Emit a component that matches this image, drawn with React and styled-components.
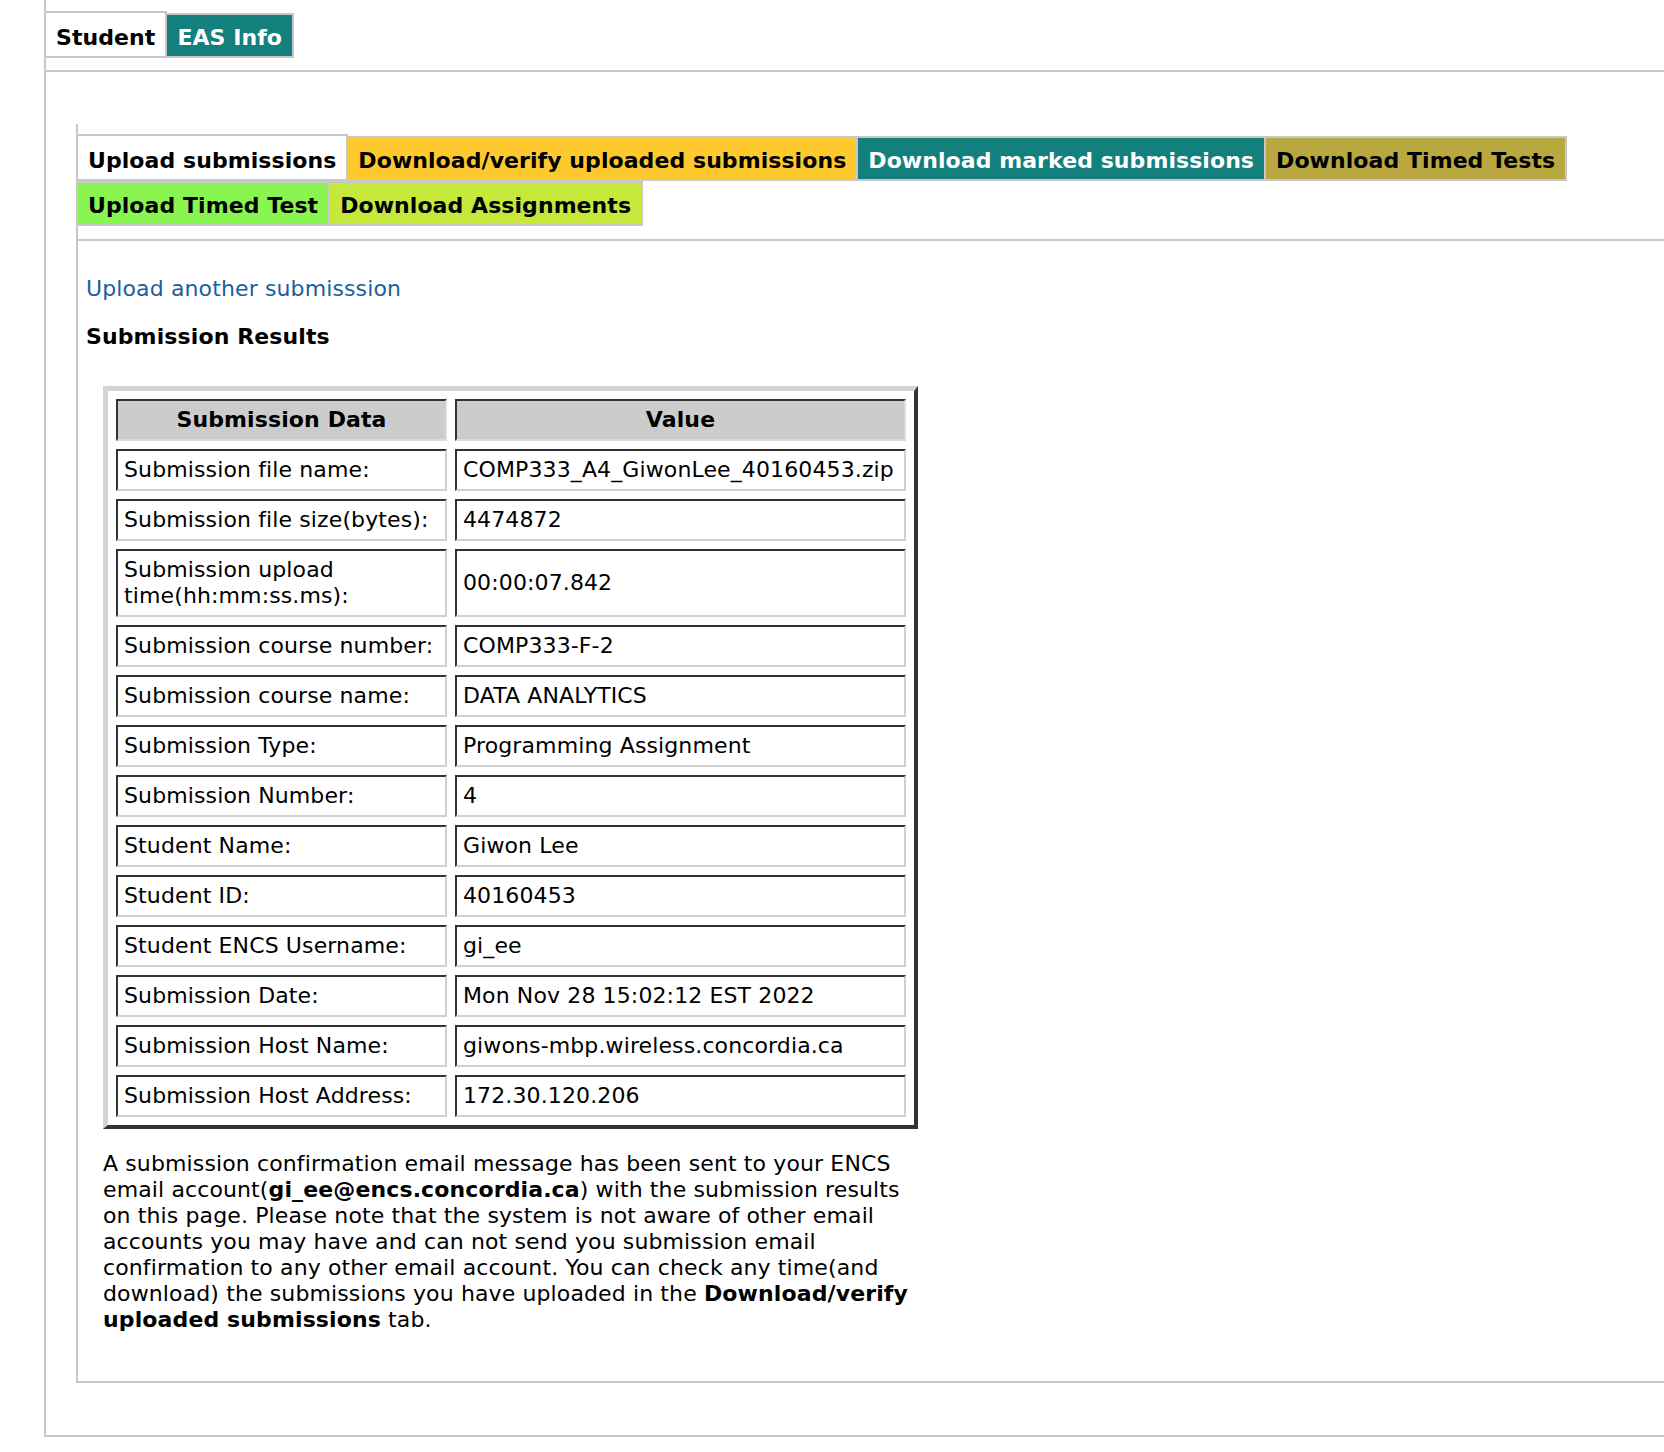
import React from 'react'
import styled, { createGlobalStyle } from 'styled-components'

const GlobalStyle = createGlobalStyle`
  html, body {
    margin: 0;
    padding: 0;
    background: #fff;
  }
  body {
    font-family: "DejaVu Sans", Verdana, sans-serif;
    font-size: 22px;
    line-height: 26px;
    letter-spacing: 0.12px;
    color: #000;
    overflow-x: hidden;
  }
`

const Frame = styled.div`
  margin-left: 44px;
  border-left: 2px solid #c8c8c8;
  border-bottom: 2px solid #c8c8c8;
`

const TabBar = styled.div`
  display: flex;
  flex-wrap: wrap;
  align-items: flex-end;
  padding: ${(p) => p.$pad};
  border-bottom: 2px solid #c8c8c8;
`

const Tab = styled.div`
  margin-left: -2px;
  padding: ${(p) => (p.$active ? '12px' : '10px')} 10px 5px;
  border: 2px solid #c8c8c8;
  background: ${(p) => p.$bg || '#fff'};
  color: ${(p) => p.$fg || '#000'};
  font-weight: bold;
  letter-spacing: 0.07px;
  white-space: nowrap;
`

const FrameBody = styled.div`
  padding: 52px 0 52px 30px;
`

const Panel = styled.div`
  border-left: 2px solid #c8c8c8;
  border-bottom: 2px solid #c8c8c8;
`

const Content = styled.div`
  padding: 13px 0 26px 8px;
`

const Para = styled.p`
  margin: 22px 0;
  font-weight: ${(p) => (p.$bold ? 'bold' : 'normal')};
`

const Link = styled.a`
  color: #1a5f9b;
  text-decoration: none;
  cursor: pointer;
`

const Indent = styled.div`
  margin-left: 17px;
`

const ResultTable = styled.table`
  margin-top: 36px;
  border-collapse: separate;
  border-spacing: 8px;
  border-style: solid;
  border-width: 5px 4px 4px 5px;
  border-color: #d4d4d4 #333 #333 #d4d4d4;
`

const HeadCell = styled.th`
  box-sizing: border-box;
  width: ${(p) => p.$w}px;
  padding: 6px;
  border-style: solid;
  border-width: 2px;
  border-color: #333 #dcdcdc #dcdcdc #333;
  background: #ccc;
  font-weight: bold;
  text-align: center;
`

const Cell = styled.td`
  padding: 6px;
  border-style: solid;
  border-width: 2px;
  border-color: #333 #d0d0d0 #d0d0d0 #333;
  vertical-align: middle;
  text-align: left;
`

const Note = styled.p`
  margin: 22px 0;
  width: 813px;
`

const outerTabs = [
  { label: 'Student', active: true },
  { label: 'EAS Info', bg: '#13807e', fg: '#fff' },
]

const innerTabs = [
  { label: 'Upload submissions', active: true },
  { label: 'Download/verify uploaded submissions', bg: '#fdc92f' },
  { label: 'Download marked submissions', bg: '#13807e', fg: '#fff' },
  { label: 'Download Timed Tests', bg: '#b8a83f' },
  { label: 'Upload Timed Test', bg: '#88f550' },
  { label: 'Download Assignments', bg: '#c6e83a' },
]

const rows = [
  ['Submission file name:', 'COMP333_A4_GiwonLee_40160453.zip'],
  ['Submission file size(bytes):', '4474872'],
  ['Submission upload time(hh:mm:ss.ms):', '00:00:07.842'],
  ['Submission course number:', 'COMP333-F-2'],
  ['Submission course name:', 'DATA ANALYTICS'],
  ['Submission Type:', 'Programming Assignment'],
  ['Submission Number:', '4'],
  ['Student Name:', 'Giwon Lee'],
  ['Student ID:', '40160453'],
  ['Student ENCS Username:', 'gi_ee'],
  ['Submission Date:', 'Mon Nov 28 15:02:12 EST 2022'],
  ['Submission Host Name:', 'giwons-mbp.wireless.concordia.ca'],
  ['Submission Host Address:', '172.30.120.206'],
]

export default function App() {
  return (
    <>
      <GlobalStyle />
      <Frame>
        <TabBar $pad="11px 0 12px 0">
          {outerTabs.map((t) => (
            <Tab key={t.label} $active={t.active} $bg={t.bg} $fg={t.fg}>
              {t.label}
            </Tab>
          ))}
        </TabBar>
        <FrameBody>
          <Panel>
            <TabBar $pad="10px 0 13px 0">
              {innerTabs.map((t) => (
                <Tab key={t.label} $active={t.active} $bg={t.bg} $fg={t.fg}>
                  {t.label}
                </Tab>
              ))}
            </TabBar>
            <Content>
              <Para>
                <Link>Upload another submisssion</Link>
              </Para>
              <Para $bold>Submission Results</Para>
              <Indent>
                <ResultTable>
                  <thead>
                    <tr>
                      <HeadCell $w={331}>Submission Data</HeadCell>
                      <HeadCell $w={451}>Value</HeadCell>
                    </tr>
                  </thead>
                  <tbody>
                    {rows.map(([k, v]) => (
                      <tr key={k}>
                        <Cell>{k}</Cell>
                        <Cell>{v}</Cell>
                      </tr>
                    ))}
                  </tbody>
                </ResultTable>
                <Note>
                  A submission confirmation email message has been sent to your ENCS
                  email account(<b>gi_ee@encs.concordia.ca</b>) with the submission
                  results on this page. Please note that the system is not aware of
                  other email accounts you may have and can not send you submission
                  email confirmation to any other email account. You can check any
                  time(and download) the submissions you have uploaded in the{' '}
                  <b>Download/verify uploaded submissions</b> tab.
                </Note>
              </Indent>
            </Content>
          </Panel>
        </FrameBody>
      </Frame>
    </>
  )
}
